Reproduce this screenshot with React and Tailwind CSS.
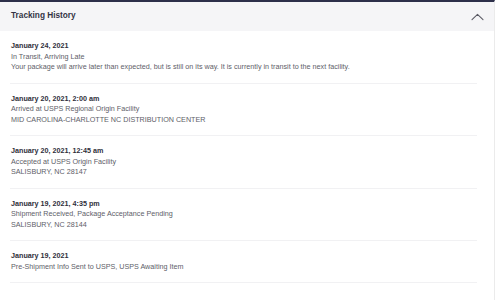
const events = [
  {
    date: "January 24, 2021",
    lines: [
      "In Transit, Arriving Late",
      "Your package will arrive later than expected, but is still on its way. It is currently in transit to the next facility.",
    ],
  },
  {
    date: "January 20, 2021, 2:00 am",
    lines: ["Arrived at USPS Regional Origin Facility", "MID CAROLINA-CHARLOTTE NC DISTRIBUTION CENTER"],
  },
  {
    date: "January 20, 2021, 12:45 am",
    lines: ["Accepted at USPS Origin Facility", "SALISBURY, NC 28147"],
  },
  {
    date: "January 19, 2021, 4:35 pm",
    lines: ["Shipment Received, Package Acceptance Pending", "SALISBURY, NC 28144"],
  },
  {
    date: "January 19, 2021",
    lines: ["Pre-Shipment Info Sent to USPS, USPS Awaiting Item"],
  },
];

export default function App() {
  return (
    <div
      className="w-[495px] h-[300px] bg-white border-t-2 border-[#2d304a] border-r border-r-[#ebebeb]"
      style={{ fontFamily: '"Liberation Sans", Arial, sans-serif' }}
    >
      <div className="h-[29px] bg-[#f5f5f7] flex items-center justify-between pl-[11px] pr-[10px]">
        <h2 className="text-[8.25px] font-bold text-[#333344]">Tracking History</h2>
        <svg width="13" height="8" viewBox="0 0 13 8" fill="none" className="text-[#5a5a64]">
          <polyline points="1,6.6 6.5,1.3 12,6.6" stroke="currentColor" strokeWidth="1.05" strokeLinecap="round" strokeLinejoin="round" />
        </svg>
      </div>

      <div className="ml-[10px] mr-[17px]">
        {events.map((ev) => (
          <div key={ev.date} className="pt-[10px] pb-[10px] pl-[1px] border-b border-[#f1f1f3] leading-[10.5px]">
            <div className="text-[7.2px] font-bold text-[#2f2f3a]">{ev.date}</div>
            {ev.lines.map((l) => (
              <div key={l} className="text-[7.2px] text-[#5e5e68]">
                {l}
              </div>
            ))}
          </div>
        ))}
      </div>
    </div>
  );
}
